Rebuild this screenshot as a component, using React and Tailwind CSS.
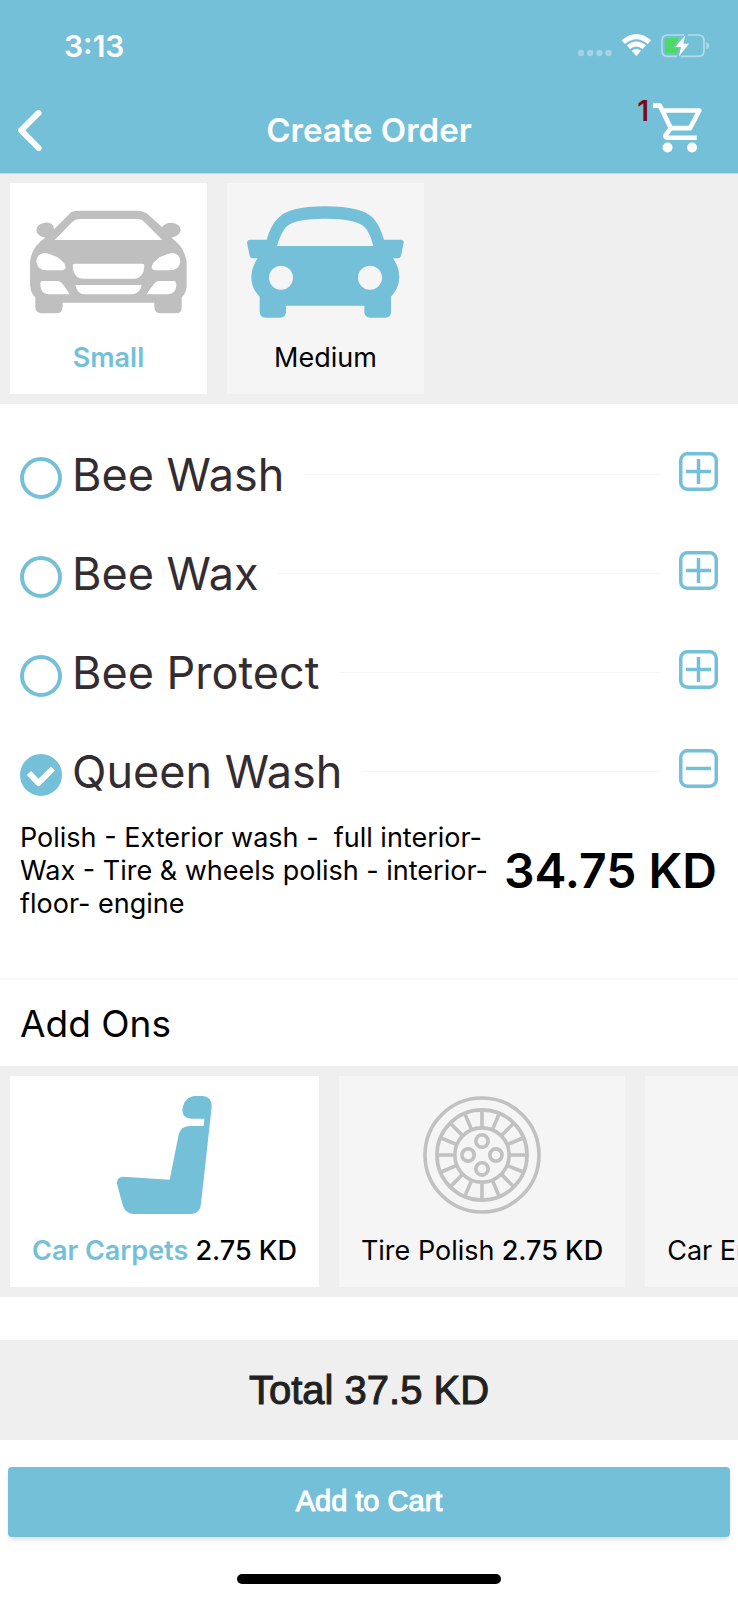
import { useState } from "react";

const BackIcon = () => (
  <svg viewBox="56 328 72 124" className="h-[41px] w-6" fill="none" stroke="currentColor" strokeWidth="18" strokeLinecap="round" strokeLinejoin="round">
    <path d="M118 337 65 389.500 118 443" />
  </svg>
);

const CartIcon = () => (
  <svg viewBox="849 306 148 150" className="h-[50px] w-[49px]" fill="none" stroke="currentColor" strokeWidth="14" strokeLinejoin="round">
    <path d="M849 313.500H870L903 381.500 M876 328H989L961 381.500H903L886 404Q886 410.500 894 410.500H981" />
    <circle cx="893" cy="440" r="15" fill="currentColor" stroke="none" />
    <circle cx="967" cy="440" r="15" fill="currentColor" stroke="none" />
  </svg>
);

const StatusIcons = () => (
  <svg viewBox="624 98 399 75" className="h-[25px] w-[133px]" aria-label="Wi-Fi on, battery charging" role="img">
    <g fill="#a3d3e4">
      <circle cx="636" cy="158" r="9.500" />
      <circle cx="663.500" cy="158" r="9.500" />
      <circle cx="691" cy="158" r="9.500" />
      <circle cx="718.500" cy="158" r="9.500" />
    </g>
    <g fill="#fff">
      <path d="M758 120Q802 82 846 120L836 131Q802 102 768 131Z" />
      <path d="M773 135Q802 112 831 135L821 146Q802 131 783 146Z" />
      <path d="M788 151Q802 141 816 151L802 167Z" strokeLinejoin="round" />
    </g>
    <g fill="none" stroke="#b5dbe9" strokeWidth="5">
      <path d="M945 104H896Q879 104 879 121V151Q879 168 896 168H924" />
      <path d="M956 104H988Q1005 104 1005 121V151Q1005 168 988 168H935" />
    </g>
    <path d="M1012 125Q1020 128 1020 136T1012 147Z" fill="#b5dbe9" />
    <path d="M932 113H896Q888 113 888 121V151Q888 159 896 159H925L929 143H912Z" fill="#4cd964" />
    <path d="M949 105 919 140H936L930 168 960 130H943Z" fill="#fff" />
  </svg>
);

const SmallCarIcon = () => (
  <svg viewBox="88 122 471 308" className="h-[118px] w-[157px] text-[#bfbfbf]" fill="currentColor" fillRule="evenodd">
    <path d="M212 126Q222 122 236 122H410Q426 122 438 130L485 172Q490 158 514 158Q540 162 540 180Q538 198 512 203Q550 228 558 275V350Q556 370 543 382V412Q543 430 526 430H482Q461 430 461 410V398H186V410Q184 430 168 430H122Q104 428 104 412V382Q90 370 88 345V275Q94 228 134 203Q108 198 107 180Q108 162 132 158Q160 156 160 178Z
      M236 147Q224 147 214 157L162 210H485L432 157Q424 147 410 147Z
      M132 248Q108 252 107 275Q110 300 138 301H182Q196 300 195 290Q188 262 132 248Z
      M515 248Q538 252 539 275Q536 300 508 301H466Q452 300 453 290Q460 262 515 248Z
      M222 281Q215 281 216 290Q220 326 248 326H402Q428 324 431 290Q432 281 424 281Z
      M124 333Q119 334 119 345Q120 371 144 373H207Q184 333 172 333Z
      M520 333Q527 334 527 345Q526 371 502 373H438Q462 333 474 333Z
      M224 345Q230 373 252 373H396Q418 370 423 345Z" />
  </svg>
);

const MediumCarIcon = () => (
  <svg viewBox="738 107 471 334" className="h-[118px] w-[157px] text-[#75c0d9]" fill="currentColor" fillRule="evenodd">
    <path d="M797 207Q810 162 831 143Q862 107 972 107Q1085 107 1117 143Q1135 162 1149 207H1198Q1209 207 1208 217L1200 255Q1198 263 1190 263H1176Q1195 290 1195 320Q1194 354 1170 378V424Q1170 441 1152 441H1108Q1090 440 1090 424V405H855V424Q854 441 837 441H794Q776 440 776 424V378Q751 354 751 320Q751 290 770 263H756Q748 263 746 255L738 217Q738 207 748 207Z
      M828 226H1117Q1108 190 1093 171Q1068 144 972 144Q878 144 855 169Q838 190 828 226Z
      M840 285A36 36 0 1 0 840 357A36 36 0 1 0 840 285Z
      M1107 285A36 36 0 1 0 1107 357A36 36 0 1 0 1107 285Z" />
  </svg>
);

const SeatIcon = () => (
  <svg viewBox="358 105 285 354" className="h-[118px] w-[95px] text-[#75c0d9]" fill="currentColor">
    <path d="M594 105H614Q643 107 642 137L610 428Q608 458 580 459H407Q382 457 375 432L358 368Q357 348 376 347L516 356L543 221Q549 196 575 195H618L620 173H582Q554 172 554 148Q558 107 594 105Z" />
  </svg>
);

const SPOKES = Array.from({ length: 16 }, (_, i) => i * 22.5);

const TireIcon = () => (
  <svg viewBox="-178 -178 356 356" className="size-[118px] text-[#c1c1c1]" fill="none" stroke="currentColor" strokeWidth="11">
    <circle r="172" />
    <circle r="136" />
    <circle r="82" />
    {SPOKES.map((angle) => (
      <path key={angle} d="M0 -86V-132" transform={`rotate(${angle})`} />
    ))}
    <circle cy="-42" r="18.500" />
    <circle cy="42" r="18.500" />
    <circle cx="-42" r="18.500" />
    <circle cx="42" r="18.500" />
  </svg>
);

const EngineIcon = () => (
  <svg viewBox="0 0 24 24" className="size-[118px] text-[#c1c1c1]" fill="none" stroke="currentColor">
    <path d="M7 8h6l3 3h3v7h-9l-3-3H5v-5h2zM10 5v3M8 5h4M2 10v5" />
  </svg>
);

const ToggleIcon = ({ open }) => (
  <svg viewBox="0 0 39 39" className="size-[39px]" fill="none" stroke="currentColor" strokeWidth="3.500">
    <rect x="1.750" y="1.750" width="35.500" height="35.500" rx="6.500" />
    <path d={open ? "M7 19.500H32" : "M7 19.500H32M19.500 7V32"} />
  </svg>
);

const SIZES = [
  { name: "Small", Icon: SmallCarIcon },
  { name: "Medium", Icon: MediumCarIcon },
];

const PACKAGES = ["Bee Wash", "Bee Wax", "Bee Protect", "Queen Wash"];

const ADD_ONS = [
  { name: "Car Carpets", Icon: SeatIcon },
  { name: "Tire Polish", Icon: TireIcon },
  { name: "Car Engine", Icon: EngineIcon },
];

function Tile({ selected, onClick, Icon, name, price }) {
  return (
    <button
      type="button"
      aria-pressed={selected}
      onClick={onClick}
      className={`flex min-w-[197px] shrink-0 flex-col items-center gap-5 py-5 text-[27px] leading-[33px] whitespace-nowrap ${price ? "px-[22px]" : "px-5"} ${selected ? "bg-white" : "bg-[#f5f5f5]"}`}
    >
      <Icon />
      <span>
        <span className={selected ? "font-semibold text-[#75c0d9]" : ""}>{name}</span>
        {price && <span className="font-medium"> {price}</span>}
      </span>
    </button>
  );
}

function PackageRow({ name, selected, onSelect }) {
  return (
    <div className="flex h-[99px] items-center px-5">
      <label className="flex items-center gap-2.5 text-[45px] leading-[56px] text-[#332d32]">
        <span className="mt-1.5 grid size-[42px] place-items-center">
          <input
            type="radio"
            name="package"
            checked={selected}
            onChange={onSelect}
            className="col-start-1 row-start-1 size-[42px] appearance-none rounded-full border-4 border-[#75c0d9] checked:bg-[#75c0d9]"
          />
          {selected && (
            <svg viewBox="0 0 42 42" className="pointer-events-none col-start-1 row-start-1 size-[42px]" fill="none" stroke="#fff" strokeWidth="6" strokeLinejoin="round">
              <path d="M9 19 18.500 29 33 14.500" />
            </svg>
          )}
        </span>
        {name}
      </label>
      <hr className="mr-[19px] ml-5 flex-1 border-[#f5f5f5]" />
      <button type="button" aria-expanded={selected} aria-label={`Details of ${name}`} className="mb-1.5 text-[#75c0d9]">
        <ToggleIcon open={selected} />
      </button>
    </div>
  );
}

export default function App() {
  const [size, setSize] = useState("Small");
  const [pack, setPack] = useState("Queen Wash");
  const [addOn, setAddOn] = useState("Car Carpets");

  return (
    <div className="min-h-screen overflow-hidden bg-white font-['Inter','Liberation_Sans',sans-serif] text-black">
      <header className="border-b border-[#b9dde9] bg-[#75c0d9] text-white">
        <div className="flex h-[91px] items-center justify-between pr-7 pl-16">
          <span className="text-[30px] leading-9 font-semibold">3:13</span>
          <StatusIcons />
        </div>
        <div className="grid h-[82px] grid-cols-[1fr_auto_1fr] items-center px-[18px] pb-1">
          <button type="button" aria-label="Back" className="justify-self-start">
            <BackIcon />
          </button>
          <h1 className="text-[33px] leading-10 font-semibold">Create Order</h1>
          <button type="button" aria-label="Cart, 1 item" className="mr-[18px] mb-1 flex items-start gap-1 justify-self-end">
            <span className="text-[28px] leading-4 font-semibold text-[#7d0a10]">1</span>
            <CartIcon />
          </button>
        </div>
      </header>

      <main>
        <section aria-label="Car size" className="flex gap-5 bg-[#efefef] px-2.5 pt-[9px] pb-2.5">
          {SIZES.map(({ name, Icon }) => (
            <Tile key={name} name={name} Icon={Icon} selected={size === name} onClick={() => setSize(name)} />
          ))}
        </section>

        <section aria-label="Packages" className="border-b-2 border-[#f7f7f7] pt-[21px] pb-[58px]">
          {PACKAGES.map((name) => (
            <PackageRow key={name} name={name} selected={pack === name} onSelect={() => setPack(name)} />
          ))}
          <div className="flex items-center justify-between gap-4 pr-[22px] pl-5">
            <p className="text-[27px] leading-[33px] whitespace-pre">
              {"Polish - Exterior wash -  full interior-\nWax - Tire & wheels polish - interior-\nfloor- engine"}
            </p>
            <p className="text-[48px] leading-[56px] font-semibold whitespace-nowrap">34.75 KD</p>
          </div>
        </section>

        <h2 className="px-5 pt-[21px] pb-[19px] text-[37px] leading-[46px]">Add Ons</h2>
        <section aria-label="Add ons" className="flex gap-5 overflow-hidden bg-[#efefef] p-2.5">
          {ADD_ONS.map(({ name, Icon }) => (
            <Tile key={name} name={name} price="2.75 KD" Icon={Icon} selected={addOn === name} onClick={() => setAddOn(name)} />
          ))}
        </section>
      </main>

      <footer className="mt-[43px] font-['Liberation_Sans',sans-serif]">
        <p className="bg-[#efefef] py-6 text-center text-[40px] leading-[52px] text-[#212121] [-webkit-text-stroke:1px_#212121]">Total 37.5 KD</p>
        <div className="px-2 pt-[27px]">
          <button type="button" className="h-[70px] w-full rounded bg-[#75c0d9] text-[29px] text-white shadow-md [-webkit-text-stroke:1px_#fff]">
            Add to Cart
          </button>
        </div>
        <div className="mx-auto mt-[37px] mb-4 h-2.5 w-[264px] rounded-full bg-black" />
      </footer>
    </div>
  );
}
